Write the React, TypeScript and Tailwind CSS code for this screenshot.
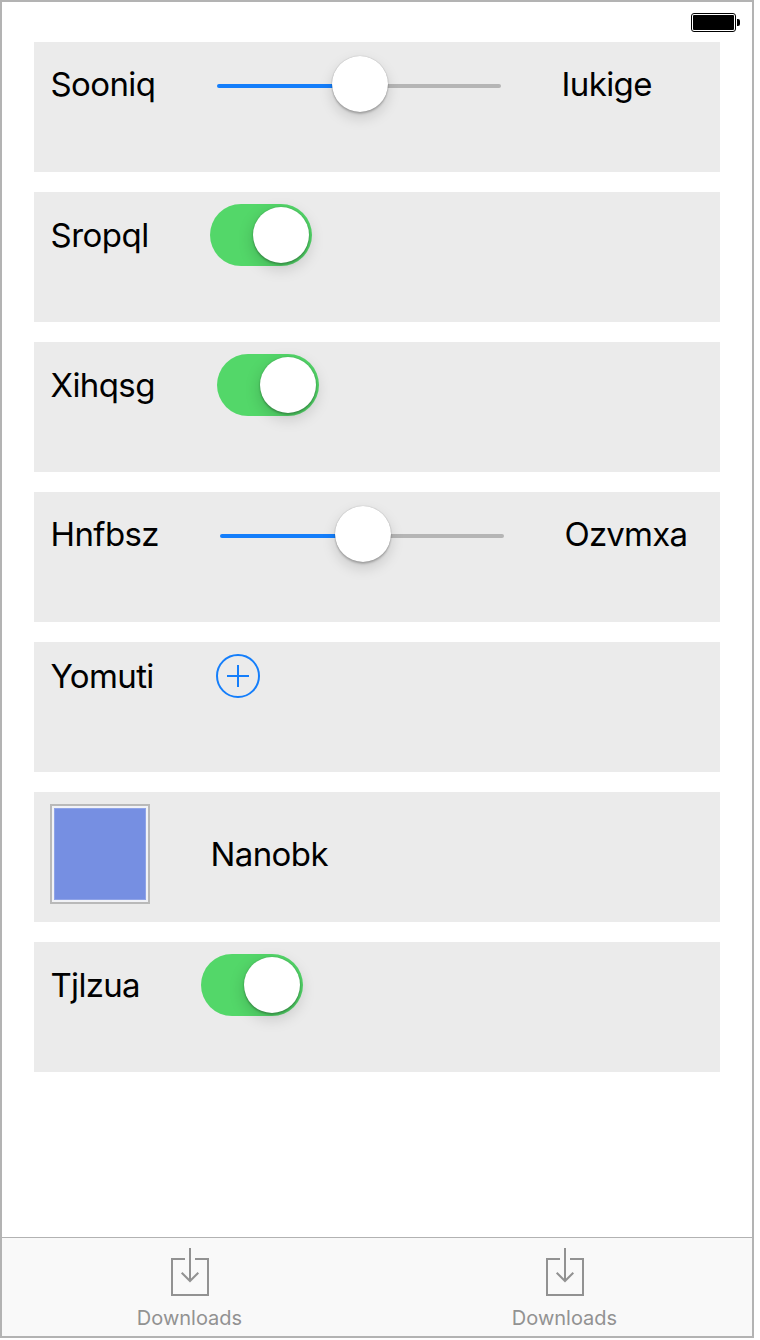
import type { ReactNode } from "react";

function Row({ children, height }: { children: ReactNode; height: string }) {
  return (
    <section className="h-[130px] bg-[#ebebeb] px-4 pt-3">
      <div className={`flex items-center gap-[60px] ${height}`}>{children}</div>
    </section>
  );
}

function Label({ text, width, tracking = "tracking-[-0.6px]" }: { text: string; width: string; tracking?: string }) {
  return (
    <span className={`shrink-0 whitespace-nowrap pl-[0.5px] text-[33px] leading-[40px] text-black ${width} ${tracking}`}>
      {text}
    </span>
  );
}

function Slider() {
  return (
    <div className="relative flex h-[60px] w-[284px] shrink-0 items-center pt-1">
      <div className="h-1 w-1/2 rounded-l-full bg-[#147efb]" />
      <div className="h-1 w-1/2 rounded-r-full bg-[#b5b5b5]" />
      <div className="absolute left-[115px] top-[2px] size-14 rounded-full bg-white shadow-[0_0_1px_rgba(0,0,0,0.35),0_2px_2px_rgba(0,0,0,0.2),0_6px_14px_rgba(0,0,0,0.15)]" />
    </div>
  );
}

function Switch() {
  return (
    <div className="flex h-[62px] w-[102px] shrink-0 justify-end rounded-full bg-[#53d769] p-[3px]">
      <div className="size-14 rounded-full bg-white shadow-[0_0_2px_rgba(0,0,0,0.2),0_2px_2px_rgba(0,0,0,0.2),0_5px_16px_rgba(0,0,0,0.18)]" />
    </div>
  );
}

function DownloadTab() {
  return (
    <div className="flex flex-1 flex-col items-center pt-[10px] text-[#929292]">
      <svg width="38" height="48" viewBox="0 0 38 48" fill="none" stroke="currentColor" strokeWidth="2">
        <path d="M14 11H1v36h36V11H24M19 0v33" />
        <path d="M10.7 24.7 19 33l8.300-8.300" />
      </svg>
      <span className="mt-[10px] text-[20px] leading-6">Downloads</span>
    </div>
  );
}

export default function App() {
  return (
    <div className="h-[1340px] w-[760px] bg-white font-['Inter',sans-serif]">
      <div className="flex h-[1338px] w-[754px] flex-col border-2 border-[#b3b3b3] bg-white">
        <header className="flex h-10 shrink-0 justify-end pr-[11px] pt-[11px]">
          <svg width="50" height="19" viewBox="0 0 50 19">
            <rect x="0.5" y="0.5" width="44" height="18" rx="2.500" fill="none" stroke="#000" />
            <rect x="2" y="2" width="41" height="15" rx="1" fill="#000" />
            <path d="M46 6h1a2 2 0 0 1 2 2v3a2 2 0 0 1-2 2h-1z" fill="#000" />
          </svg>
        </header>
        <main className="flex flex-1 flex-col gap-5 px-8">
          <Row height="h-[60px]">
            <Label text="Sooniq" width="w-[107px]" />
            <Slider />
            <Label text="Iukige" width="w-[92px]" />
          </Row>
          <Row height="h-[62px]">
            <Label text="Sropql" width="w-[100px]" tracking="tracking-[-0.5px]" />
            <Switch />
          </Row>
          <Row height="h-[62px]">
            <Label text="Xihqsg" width="w-[107px]" />
            <Switch />
          </Row>
          <Row height="h-[60px]">
            <Label text="Hnfbsz" width="w-[110px]" />
            <Slider />
            <Label text="Ozvmxa" width="w-[124px]" tracking="tracking-[-0.8px]" />
          </Row>
          <Row height="h-11">
            <Label text="Yomuti" width="w-[106px]" />
            <svg width="44" height="44" viewBox="0 0 44 44" fill="none" stroke="#147efb" strokeWidth="2">
              <circle cx="22" cy="22" r="21" />
              <path d="M11 22h22M22 11v22" />
            </svg>
          </Row>
          <Row height="h-[100px]">
            <div className="size-[100px] shrink-0 border-2 border-[#b9b9b9] bg-[#f1f2f6] p-[2px]">
              <div className="size-full border border-[#8fa3e7] bg-[#768fe2]" />
            </div>
            <Label text="Nanobk" width="w-[119px]" />
          </Row>
          <Row height="h-[62px]">
            <Label text="Tjlzua" width="w-[91px]" tracking="tracking-[-0.7px]" />
            <Switch />
          </Row>
        </main>
        <nav className="flex h-[99px] shrink-0 border-t border-[#b2b2b2] bg-[#f9f9f9]">
          <DownloadTab />
          <DownloadTab />
        </nav>
      </div>
    </div>
  );
}
